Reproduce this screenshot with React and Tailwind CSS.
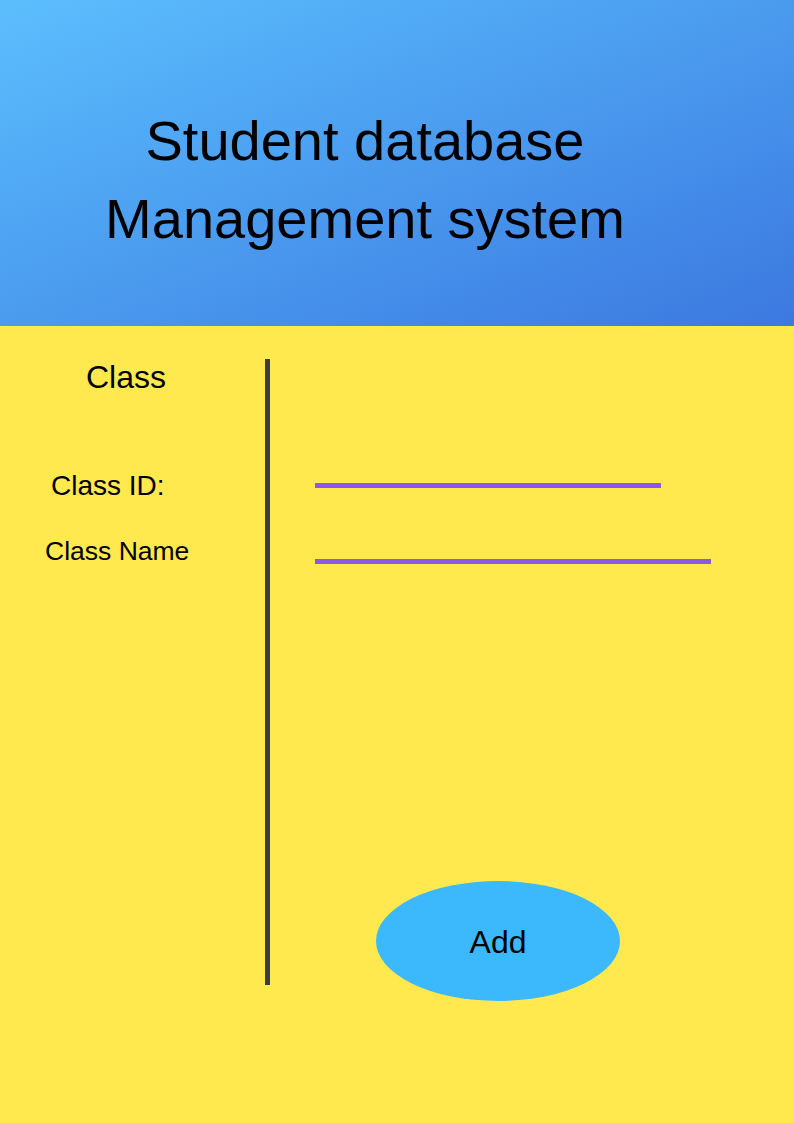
export default function App() {
  return (
    <div className="w-[794px] h-[1123px] overflow-hidden bg-[#ffe94f] text-black" style={{ fontFamily: '"Liberation Sans", Arial, sans-serif' }}>
      <header className="h-[326px] bg-gradient-to-br from-[#5cbefd] to-[#3c78e0] pt-[102px]">
        <h1 className="w-[730px] text-center text-[56px] leading-[78px] font-normal">
          Student database
          <br />
          Management system
        </h1>
      </header>

      <main className="flex pt-[33px]">
        <div className="w-[265px] flex flex-col">
          <div className="mt-[2px] pl-[86px] text-[32px] leading-[33px]">Class</div>
          <div className="mt-[77px] pl-[51px] text-[28px] leading-[29px]">Class ID:</div>
          <div className="mt-[38px] pl-[45px] text-[26.5px] leading-[27px]">Class Name</div>
        </div>

        <div className="w-[5px] h-[626px] bg-[#3f3c38]" />

        <div className="flex flex-col">
          <div className="mt-[124px] ml-[45px] w-[346px] h-[5px] bg-[#8c58ec]" />
          <div className="mt-[71px] ml-[45px] w-[396px] h-[5px] bg-[#8c58ec]" />
          <button className="mt-[317px] ml-[106px] w-[244px] h-[120px] rounded-[50%] bg-[#3cb8fd] text-[32px] leading-[34px] text-black flex items-center justify-center pt-[2px]">
            Add
          </button>
        </div>
      </main>
    </div>
  );
}
